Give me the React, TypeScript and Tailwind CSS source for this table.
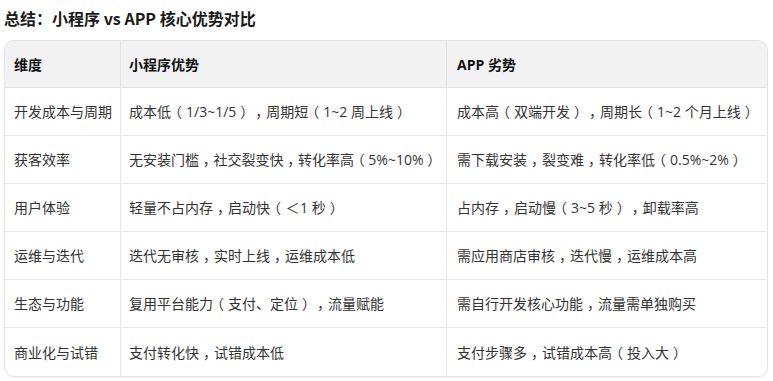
const rows: [string, string, string][] = [
  ["开发成本与周期", "成本低（1/3~1/5），周期短（1~2 周上线）", "成本高（双端开发），周期长（1~2 个月上线）"],
  ["获客效率", "无安装门槛，社交裂变快，转化率高（5%~10%）", "需下载安装，裂变难，转化率低（0.5%~2%）"],
  ["用户体验", "轻量不占内存，启动快（＜1 秒）", "占内存，启动慢（3~5 秒），卸载率高"],
  ["运维与迭代", "迭代无审核，实时上线，运维成本低", "需应用商店审核，迭代慢，运维成本高"],
  ["生态与功能", "复用平台能力（支付、定位），流量赋能", "需自行开发核心功能，流量需单独购买"],
  ["商业化与试错", "支付转化快，试错成本低", "支付步骤多，试错成本高（投入大）"],
];

// full-width punctuation gets a wide box with the glyph centred, as in the screenshot
function Cell({ text }: { text: string }) {
  return (
    <>
      {text.split(/([（），＜])/).map((part, i) =>
        part === "（" || part === "）" || part === "，" || part === "＜" ? (
          <span key={i} className="inline-block w-[15px] text-center [font-feature-settings:'halt']">
            {part}
          </span>
        ) : (
          <span key={i}>{part}</span>
        )
      )}
    </>
  );
}

export default function App() {
  return (
    <div className="w-[773px] h-[381px] bg-white text-[#333] [font-family:'Open_Sans','Noto_Sans_CJK_SC',sans-serif]">
      <h2 className="px-1 pt-[6px] mb-[10px] text-[16px] leading-[24px] font-bold text-[#1a1a1a] [font-family:'Noto_Sans_CJK_SC',sans-serif]">
        总结：小程序 vs APP 核心优势对比
      </h2>
      <div className="mx-1 w-[764px] border border-[#e3e3e3] rounded-[10px] overflow-hidden shadow-[0_1px_2px_rgba(0,0,0,0.04)]">
        <div className="grid grid-cols-[116px_326px_1fr] bg-[#f2f2f2] border-b border-[#e3e3e3] h-[47px] text-[14px] font-bold text-[#111]">
          <div className="px-[9px] flex items-center border-r border-[#e3e3e3]">维度</div>
          <div className="px-[8px] flex items-center border-r border-[#e3e3e3]">小程序优势</div>
          <div className="px-[10px] flex items-center">APP 劣势</div>
        </div>
        {rows.map((r, i) => (
          <div
            key={i}
            className={
              "grid grid-cols-[116px_326px_1fr] h-[48px] text-[14px] " +
              (i < rows.length - 1 ? "border-b border-[#e8e8e8]" : "")
            }
          >
            <div className="px-[9px] flex items-center border-r border-[#e8e8e8] whitespace-nowrap">{r[0]}</div>
            <div className="px-[8px] flex items-center border-r border-[#e8e8e8] whitespace-nowrap">
              <Cell text={r[1]} />
            </div>
            <div className="px-[10px] flex items-center whitespace-nowrap">
              <Cell text={r[2]} />
            </div>
          </div>
        ))}
      </div>
    </div>
  );
}
